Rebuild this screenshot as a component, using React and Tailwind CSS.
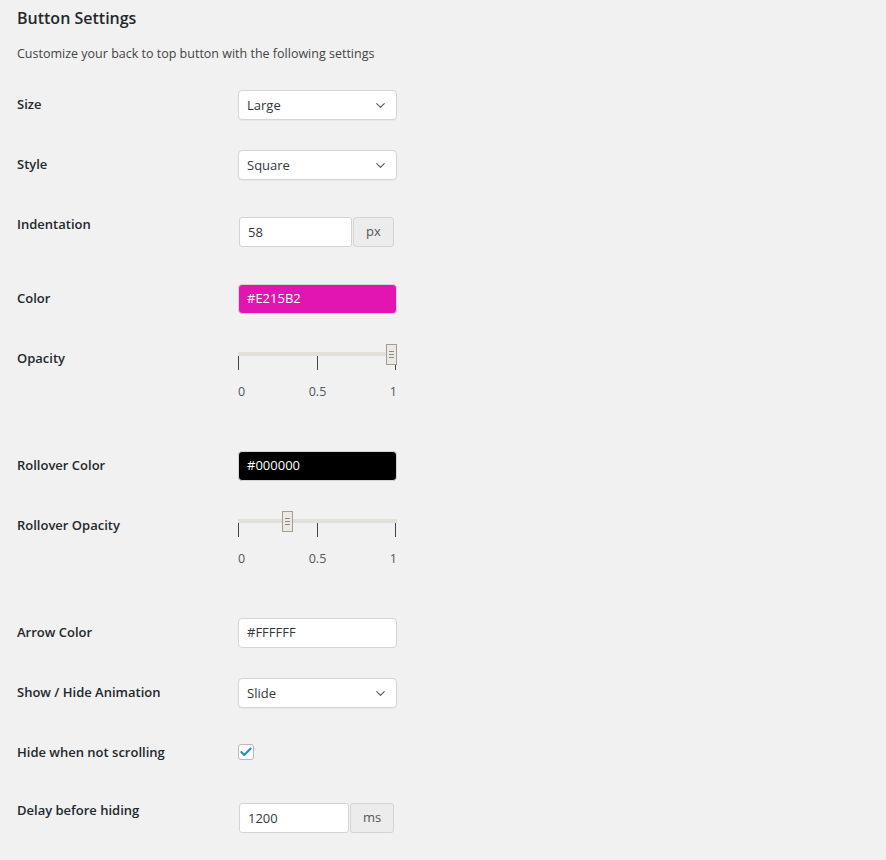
import { ChevronDown, Check } from 'lucide-react'

const font = { fontFamily: '"Open Sans", "Noto Sans", sans-serif' }

function Row({ label, h, lpt = 'pt-[20px]', cpt = 'pt-[15px]', children }) {
  return (
    <div className={`flex ${h}`}>
      <div className={`w-[221px] shrink-0 ${lpt}`}>
        <span className="block text-[13px] leading-[18px] font-semibold text-[#23282d]">{label}</span>
      </div>
      <div className={cpt}>{children}</div>
    </div>
  )
}

function Select({ value }) {
  return (
    <div className="flex h-[30px] w-[159px] items-center justify-between rounded-[4px] border border-[#d4d4d4] bg-white pl-[8px] pr-[8px] shadow-[0_1px_1px_rgba(0,0,0,0.04)]">
      <span className="pt-[1px] text-[13px] text-[#32373c]">{value}</span>
      <ChevronDown size={15} strokeWidth={1.75} className="text-[#555]" />
    </div>
  )
}

function AddonInput({ value, unit, w, aw }) {
  return (
    <div className="flex h-[30px] gap-[1px]">
      <div className={`flex items-center rounded-[3px] border border-[#d4d4d4] bg-white pl-[8px] ${w}`}>
        <span className="pt-[1px] text-[13px] text-[#32373c]">{value}</span>
      </div>
      <div className={`flex items-center justify-center rounded-[3px] border border-[#d4d4d4] bg-[#ececec] ${aw}`}>
        <span className="text-[13px] text-[#555]">{unit}</span>
      </div>
    </div>
  )
}

function ColorField({ value, bg, text }) {
  return (
    <div className={`flex h-[30px] w-[159px] items-center rounded-[4px] border border-[#d4d4d4] pl-[8px] ${bg}`}>
      <span className={`text-[13px] ${text}`}>{value}</span>
    </div>
  )
}

function Slider({ pos }) {
  return (
    <div className="w-[159px]">
      <div className="relative h-[26px]">
        <div className="absolute left-0 right-0 top-[8px] h-[4px] bg-[#e3e0dc]" />
        <div className="absolute left-0 top-[12px] h-[14px] w-[1px] bg-[#444]" />
        <div className="absolute left-[79px] top-[12px] h-[14px] w-[1px] bg-[#444]" />
        <div className="absolute right-[1px] top-[12px] h-[14px] w-[1px] bg-[#444]" />
        <div
          className="absolute top-0 flex h-[21px] w-[11px] flex-col items-center justify-center gap-[2px] border border-[#a39d97] bg-[#ece9e5]"
          style={{ left: pos }}
        >
          <div className="h-[1px] w-[5px] bg-[#8f8984]" />
          <div className="h-[1px] w-[5px] bg-[#8f8984]" />
          <div className="h-[1px] w-[5px] bg-[#8f8984]" />
        </div>
      </div>
      <div className="mt-[13px] flex justify-between text-[12.5px] leading-[18px] text-[#50575e]">
        <span>0</span>
        <span>0.5</span>
        <span>1</span>
      </div>
    </div>
  )
}

export default function App() {
  return (
    <div className="min-h-[860px] bg-[#f1f1f1] pl-[17px]" style={font}>
      <h2 className="pt-[8px] text-[16px] leading-[20px] font-semibold text-[#23282d]">Button Settings</h2>
      <p className="mt-[17px] text-[12.5px] leading-[18px] text-[#444]">
        Customize your back to top button with the following settings
      </p>
      <div className="mt-[12px]">
        <Row label="Size" h="h-[60px]">
          <Select value="Large" />
        </Row>
        <Row label="Style" h="h-[60px]">
          <Select value="Square" />
        </Row>
        <Row label="Indentation" h="h-[74px]" cpt="pt-[22px] pl-[1px]">
          <AddonInput value="58" unit="px" w="w-[113px]" aw="w-[41px]" />
        </Row>
        <Row label="Color" h="h-[60px]">
          <ColorField value="#E215B2" bg="bg-[#e215b2]" text="text-white" />
        </Row>
        <Row label="Opacity" h="h-[107px]">
          <Slider pos="148px" />
        </Row>
        <Row label="Rollover Color" h="h-[60px]">
          <ColorField value="#000000" bg="bg-black" text="text-white" />
        </Row>
        <Row label="Rollover Opacity" h="h-[107px]">
          <Slider pos="44px" />
        </Row>
        <Row label="Arrow Color" h="h-[60px]">
          <ColorField value="#FFFFFF" bg="bg-white" text="text-[#32373c]" />
        </Row>
        <Row label="Show / Hide Animation" h="h-[60px]">
          <Select value="Slide" />
        </Row>
        <Row label="Hide when not scrolling" h="h-[58px]" cpt="pt-[21px]">
          <div className="flex h-[16px] w-[16px] items-center justify-center rounded-[3px] border border-[#b4b9be] bg-white">
            <Check size={14} strokeWidth={3.5} className="text-[#1e8cbe]" />
          </div>
        </Row>
        <Row label="Delay before hiding" h="h-[79px]" cpt="pt-[22px] pl-[1px]">
          <AddonInput value="1200" unit="ms" w="w-[110px]" aw="w-[44px]" />
        </Row>
      </div>
    </div>
  )
}
